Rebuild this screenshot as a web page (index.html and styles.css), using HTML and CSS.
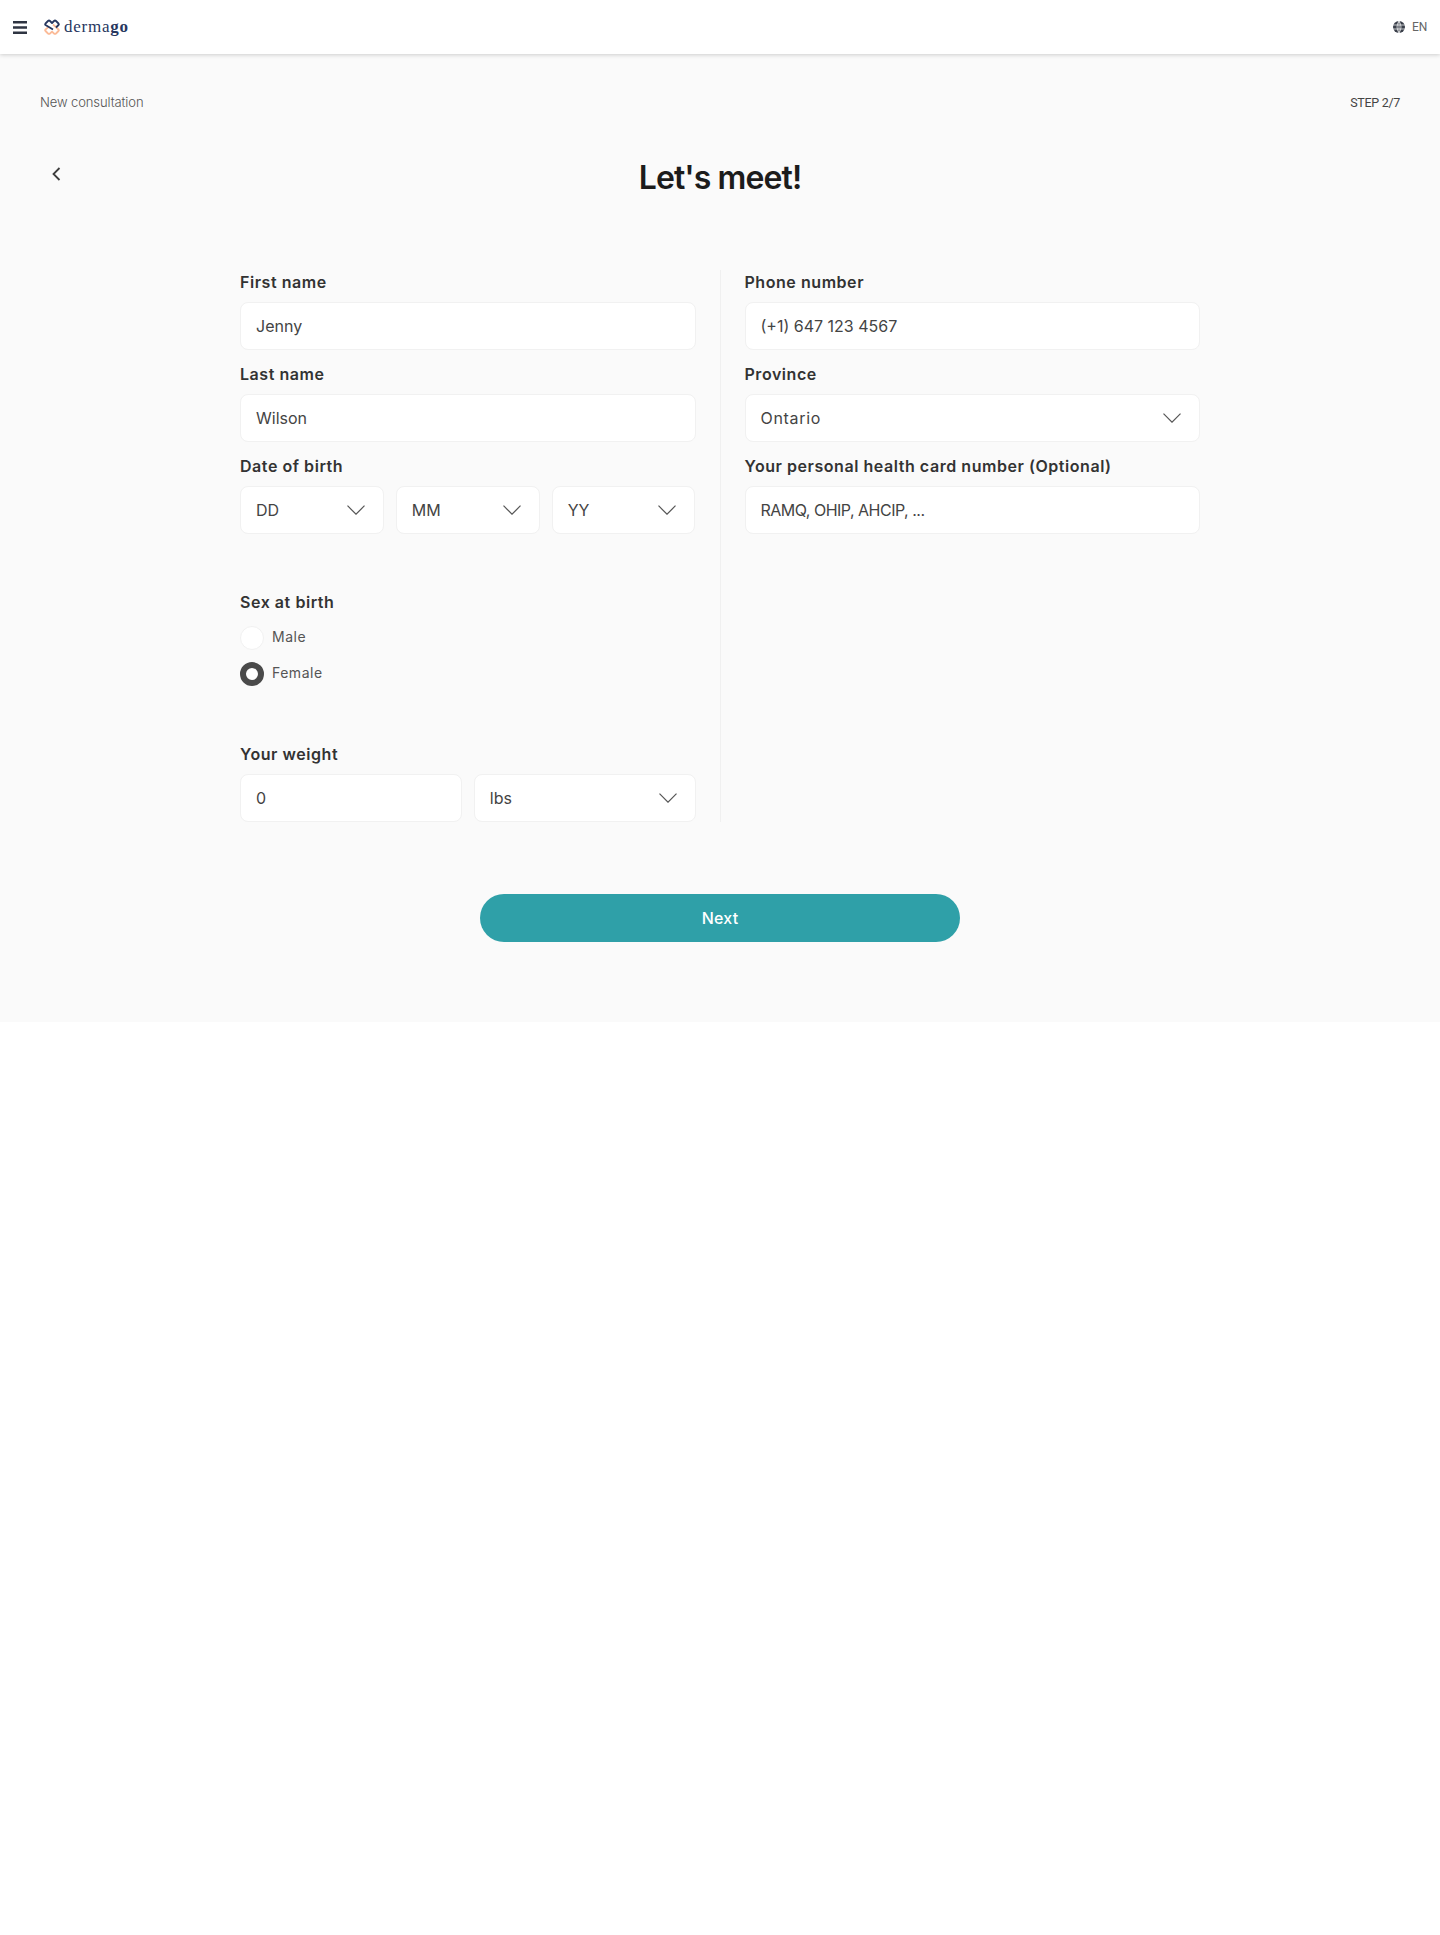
FILE: index.html
```html
<!DOCTYPE html>
<html lang="en">
<head>
    <meta charset="UTF-8">
    <meta name="viewport" content="width=device-width, initial-scale=1.0">
    <title>dermago - New consultation</title>
    <link rel="stylesheet" href="styles.css">
</head>
<body>
    <header class="topbar">
        <div class="topbar-left">
            <svg class="menu-icon" width="14" height="13" viewBox="0 0 14 13">
                <path d="M0 1.25h14M0 6.5h14M0 11.75h14" stroke="#2f3542" stroke-width="2.5"/>
            </svg>
            <svg class="logo-mark" width="16" height="16" viewBox="0 0 16 16" fill="none" stroke-width="1.8" stroke-linejoin="round">
                <path d="M4.5 8L1.5 10.5Q.8 11.2 1.5 12L4 14.5Q5 15.3 6 14.5L8 12.6L10 14.5Q11 15.3 12 14.5L14.5 12Q15.2 11.2 14.5 10.5L9 5.5" stroke="#fbbb98"/>
                <path d="M9 10.5L1.5 6Q.8 5.3 1.5 4.5L4 2Q5 1 6 2L8 4L10 2Q11 1 12 2L14.5 4.5Q15.2 5.3 14.5 6L12 8.5" stroke="#27375f"/>
            </svg>
            <span class="logo-text">derma<b>go</b></span>
        </div>
        <div class="lang">
            <svg width="12" height="12" viewBox="0 0 12 12">
                <circle cx="6" cy="6" r="6" fill="#3a3f4a"/>
                <path d="M0 4h12M0 8h12M6 0v12M6 0Q2 6 6 12M6 0Q10 6 6 12" fill="none" stroke="#fff" stroke-width=".7"/>
            </svg>
            <span>EN</span>
        </div>
    </header>

    <main class="page">
        <div class="page-top">
            <span class="crumb">New consultation</span>
            <span class="step">STEP 2/7</span>
        </div>

        <div class="title-row">
            <svg class="back-icon" width="9" height="14" viewBox="0 0 9 14">
                <path d="M7.5 1L1.5 7l6 6" fill="none" stroke="#3d3d3d" stroke-width="1.8"/>
            </svg>
            <h1>Let's meet!</h1>
        </div>

        <form class="form-grid">
            <div class="col col-left">
                <div class="field">
                    <div class="label">First name</div>
                    <div class="box">Jenny</div>
                </div>
                <div class="field">
                    <div class="label">Last name</div>
                    <div class="box">Wilson</div>
                </div>
                <div class="field">
                    <div class="label">Date of birth</div>
                    <div class="row-3">
                        <div class="box select">DD
                            <svg class="chev" width="18" height="10" viewBox="0 0 18 10"><path d="M.5.7L9 9.2 17.5.7"/></svg>
                        </div>
                        <div class="box select">MM
                            <svg class="chev" width="18" height="10" viewBox="0 0 18 10"><path d="M.5.7L9 9.2 17.5.7"/></svg>
                        </div>
                        <div class="box select">YY
                            <svg class="chev" width="18" height="10" viewBox="0 0 18 10"><path d="M.5.7L9 9.2 17.5.7"/></svg>
                        </div>
                    </div>
                </div>

                <div class="field group">
                    <div class="label">Sex at birth</div>
                    <div class="radio"><span class="dot"></span>Male</div>
                    <div class="radio"><span class="dot on"></span>Female</div>
                </div>

                <div class="field group last">
                    <div class="label">Your weight</div>
                    <div class="row-2">
                        <div class="box">0</div>
                        <div class="box select">lbs
                            <svg class="chev" width="18" height="10" viewBox="0 0 18 10"><path d="M.5.7L9 9.2 17.5.7"/></svg>
                        </div>
                    </div>
                </div>
            </div>

            <div class="col col-right">
                <div class="field">
                    <div class="label">Phone number</div>
                    <div class="box">(+1) 647 123 4567</div>
                </div>
                <div class="field">
                    <div class="label">Province</div>
                    <div class="box select"><span class="wide">Ontario</span>
                        <svg class="chev" width="18" height="10" viewBox="0 0 18 10"><path d="M.5.7L9 9.2 17.5.7"/></svg>
                    </div>
                </div>
                <div class="field">
                    <div class="label">Your personal health card number (Optional)</div>
                    <div class="box"><span class="tight">RAMQ, OHIP, AHCIP, ...</span></div>
                </div>
            </div>
        </form>

        <div class="actions">
            <button type="button" class="next-btn">Next</button>
        </div>
    </main>
</body>
</html>
```

FILE: styles.css
```css
body {
    margin: 0;
    min-height: 1935px;
    background: #fff;
    font-family: Inter, sans-serif;
    color: #444;
}
.topbar {
    position: relative;
    display: flex;
    justify-content: space-between;
    align-items: center;
    height: 54px;
    padding: 0 13px;
    background: #fff;
    box-shadow: 0 1px 4px rgba(0,0,0,0.18);
}
.topbar-left {
    display: flex;
    align-items: center;
}
.menu-icon {
    margin-right: 17px;
}
.logo-mark {
    margin-right: 4px;
}
.logo-text {
    font-family: "Liberation Serif", serif;
    font-size: 17px;
    letter-spacing: 0.75px;
    color: #27375f;
}
.lang {
    display: flex;
    align-items: center;
    gap: 7px;
    font-family: Roboto, sans-serif;
    font-size: 12px;
    letter-spacing: -0.2px;
    color: #666;
}
.page {
    height: 968px;
    padding: 40px 40px 0;
    background: #fafafa;
    box-sizing: border-box;
}
.page-top {
    display: flex;
    justify-content: space-between;
    align-items: center;
    height: 16px;
}
.crumb {
    font-size: 13px;
    font-weight: 300;
    letter-spacing: -0.1px;
    color: #555;
}
.step {
    font-family: Roboto, sans-serif;
    font-size: 12.5px;
    letter-spacing: -0.3px;
    color: #444;
}
.title-row {
    position: relative;
    margin-top: 48px;
    text-align: center;
}
.back-icon {
    position: absolute;
    left: 12px;
    top: 9px;
}
h1 {
    margin: 0;
    font-size: 32px;
    line-height: 40px;
    font-weight: 600;
    letter-spacing: -0.9px;
    color: #1c1c1c;
}
.form-grid {
    display: flex;
    justify-content: center;
    margin-top: 72px;
}
.col {
    width: 455.5px;
}
.col-left {
    padding-right: 24.5px;
    border-right: 1px solid #f0f0f0;
}
.col-right {
    padding-left: 23.5px;
}
.field {
    margin-bottom: 12px;
}
.field.group {
    margin-top: 56px;
}
.field.last {
    margin-bottom: 0;
}
.label {
    height: 24px;
    margin-bottom: 8px;
    font-size: 16px;
    line-height: 24px;
    font-weight: 600;
    letter-spacing: 0.55px;
    color: #333;
}
.box {
    display: flex;
    justify-content: space-between;
    align-items: center;
    height: 48px;
    padding: 0 18px 0 15px;
    background: #fff;
    border: 1px solid #f1f1f1;
    border-radius: 8px;
    box-sizing: border-box;
    font-size: 16px;
    color: #444;
}
.wide {
    letter-spacing: 0.7px;
}
.tight {
    letter-spacing: -0.5px;
}
.chev {
    fill: none;
    stroke: #555;
    stroke-width: 1.2;
}
.row-3 {
    display: grid;
    grid-template-columns: repeat(3, 1fr);
    gap: 12px;
}
.row-2 {
    display: grid;
    grid-template-columns: repeat(2, 1fr);
    gap: 12px;
}
.radio {
    display: flex;
    align-items: flex-start;
    gap: 8px;
    height: 24px;
    margin-top: 12px;
    font-size: 14px;
    line-height: 22px;
    letter-spacing: 0.5px;
    color: #555;
}
.dot {
    width: 24px;
    height: 24px;
    background: #fff;
    border: 1px solid #f1f1f1;
    border-radius: 50%;
    box-sizing: border-box;
}
.dot.on {
    border: 6px solid #4a4a4a;
}
.actions {
    display: flex;
    justify-content: center;
    margin-top: 72px;
}
.next-btn {
    width: 480px;
    height: 48px;
    background: #2fa0a8;
    border: none;
    border-radius: 24px;
    font-family: Inter, sans-serif;
    font-size: 16px;
    font-weight: 500;
    letter-spacing: 0.2px;
    color: #fff;
    cursor: pointer;
}
```
